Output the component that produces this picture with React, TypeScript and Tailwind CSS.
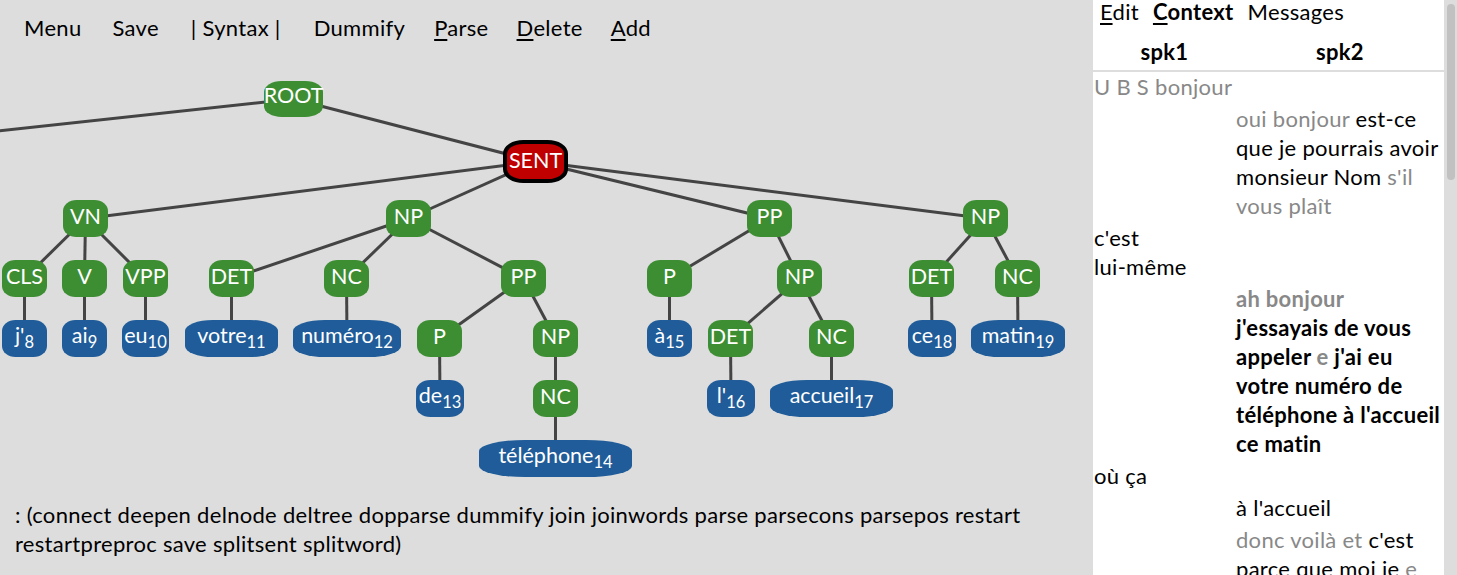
import React from "react";

type Node = { id: string; x1: number; x2: number; y1: number; y2: number; label: string; sub?: string; kind: "phrase" | "word" | "sent" };

const R2 = [200, 237];
const R3 = [260, 297];
const R4 = [320, 357];
const R5 = [380, 417];
const R6 = [440, 477];

const n = (id: string, x1: number, x2: number, row: number[], label: string, kind: Node["kind"] = "phrase", sub?: string): Node => ({ id, x1, x2, y1: row[0], y2: row[1], label, sub, kind });

const nodes: Node[] = [
  { id: "root", x1: 264, x2: 323, y1: 81, y2: 117, label: "ROOT", kind: "phrase" },
  { id: "sent", x1: 505, x2: 566, y1: 142, y2: 181, label: "SENT", kind: "sent" },
  n("vn", 63, 108, R2, "VN"),
  n("npa", 386, 431, R2, "NP"),
  n("ppa", 747, 792, R2, "PP"),
  n("npb", 963, 1008, R2, "NP"),
  n("cls", 2, 47, R3, "CLS"),
  n("v", 62, 107, R3, "V"),
  n("vpp", 123, 168, R3, "VPP"),
  n("deta", 209, 254, R3, "DET"),
  n("nca", 324, 369, R3, "NC"),
  n("ppb", 501, 546, R3, "PP"),
  n("pa", 647, 692, R3, "P"),
  n("npc", 777, 822, R3, "NP"),
  n("detb", 909, 954, R3, "DET"),
  n("ncb", 995, 1040, R3, "NC"),
  n("w8", 2, 47, R4, "j'", "word", "8"),
  n("w9", 62, 107, R4, "ai", "word", "9"),
  n("w10", 122, 169, R4, "eu", "word", "10"),
  n("w11", 185, 278, R4, "votre", "word", "11"),
  n("w12", 293, 401, R4, "numéro", "word", "12"),
  n("pb", 417, 462, R4, "P"),
  n("npd", 533, 578, R4, "NP"),
  n("w15", 647, 692, R4, "à", "word", "15"),
  n("detc", 708, 753, R4, "DET"),
  n("ncc", 809, 854, R4, "NC"),
  n("w18", 908, 956, R4, "ce", "word", "18"),
  n("w19", 971, 1065, R4, "matin", "word", "19"),
  n("w13", 416, 464, R5, "de", "word", "13"),
  n("ncd", 533, 578, R5, "NC"),
  n("w16", 707, 755, R5, "l'", "word", "16"),
  n("w17", 770, 893, R5, "accueil", "word", "17"),
  n("w14", 479, 632, R6, "téléphone", "word", "14"),
];

const edges: [string, string][] = [
  ["root", "sent"], ["sent", "vn"], ["sent", "npa"], ["sent", "ppa"], ["sent", "npb"],
  ["vn", "cls"], ["vn", "v"], ["vn", "vpp"], ["npa", "deta"], ["npa", "nca"], ["npa", "ppb"],
  ["ppb", "pb"], ["ppb", "npd"], ["ppa", "pa"], ["ppa", "npc"], ["npc", "detc"], ["npc", "ncc"],
  ["npb", "detb"], ["npb", "ncb"], ["cls", "w8"], ["v", "w9"], ["vpp", "w10"], ["deta", "w11"],
  ["nca", "w12"], ["pb", "w13"], ["npd", "ncd"], ["ncd", "w14"], ["pa", "w15"], ["detc", "w16"],
  ["ncc", "w17"], ["detb", "w18"], ["ncb", "w19"],
];

const byId = Object.fromEntries(nodes.map((d) => [d.id, d]));
const cx = (d: Node) => (d.x1 + d.x2) / 2;
const cy = (d: Node) => (d.y1 + d.y2) / 2;

function Tree() {
  return (
    <svg width={1093} height={433} viewBox="0 57 1093 433" className="block" style={{ fontFamily: "Lato, sans-serif" }}>
      <line x1={293.5} y1={99} x2={-300} y2={163} stroke="#444" strokeWidth={3} />
      {edges.map(([a, b]) => (
        <line key={a + b} x1={cx(byId[a])} y1={cy(byId[a])} x2={cx(byId[b])} y2={cy(byId[b])} stroke="#444" strokeWidth={3} />
      ))}
      {nodes.map((d) => {
        const w = d.x2 - d.x1;
        const h = d.y2 - d.y1;
        const fill = d.kind === "word" ? "#1f5c99" : d.kind === "sent" ? "#c00000" : "#3d8e33";
        const base = d.kind === "word" ? d.y1 + 22.5 : d.kind === "sent" ? 168 : d.id === "root" ? 103 : d.y1 + 23.5;
        return (
          <g key={d.id}>
            <rect x={d.x1} y={d.y1} width={w} height={h} rx={w * 0.3} ry={h * 0.3} fill={fill}
              stroke={d.kind === "sent" ? "#000" : "none"} strokeWidth={d.kind === "sent" ? 4 : 0} />
            <text x={cx(d)} y={base} textAnchor="middle" fill="#fff" fontSize={21.5}>
              {d.label}
              {d.sub && <tspan fontSize={16.5} dy={5}>{d.sub}</tspan>}
            </text>
          </g>
        );
      })}
    </svg>
  );
}

type Seg = { t: string; g?: boolean };
type Row = { col: 1 | 2; bold?: boolean; lines: Seg[][] };

const rows: Row[] = [
  { col: 1, lines: [[{ t: "U B S bonjour", g: true }]] },
  { col: 2, lines: [
    [{ t: "oui bonjour ", g: true }, { t: "est-ce" }],
    [{ t: "que je pourrais avoir" }],
    [{ t: "monsieur Nom " }, { t: "s'il", g: true }],
    [{ t: "vous plaît", g: true }],
  ] },
  { col: 1, lines: [[{ t: "c'est" }], [{ t: "lui-même" }]] },
  { col: 2, bold: true, lines: [
    [{ t: "ah bonjour", g: true }],
    [{ t: "j'essayais de vous" }],
    [{ t: "appeler " }, { t: "e", g: true }, { t: " j'ai eu" }],
    [{ t: "votre numéro de" }],
    [{ t: "téléphone à l'accueil" }],
    [{ t: "ce matin" }],
  ] },
  { col: 1, lines: [[{ t: "où ça" }]] },
  { col: 2, lines: [[{ t: "à l'accueil" }]] },
  { col: 2, lines: [
    [{ t: "donc voilà et ", g: true }, { t: "c'est" }],
    [{ t: "parce que moi je " }, { t: "e", g: true }],
  ] },
];

function Context() {
  return (
    <div className="w-[351px] h-full bg-white overflow-hidden text-[22px] tracking-[0.3px] text-black">
      <div className="flex h-[24px] leading-[24px] pl-[7px] gap-[14px]">
        <span><span className="underline underline-offset-[3px]">E</span>dit</span>
        <span className="font-bold"><span className="underline underline-offset-[3px]">C</span>ontext</span>
        <span>Messages</span>
      </div>
      <div className="flex h-[46px] pt-[13px] leading-[29px] font-bold">
        <div className="w-[143px] text-center">spk1</div>
        <div className="flex-1 text-center">spk2</div>
      </div>
      <div className="h-[2px] bg-[#dddddd]" />
      <div className="flex flex-col gap-[3px] leading-[29px]">
        {rows.map((r, i) => (
          <div key={i} className={`flex ${r.bold ? "font-bold" : ""}`}>
            <div className={r.col === 1 ? "pl-[1px] w-[143px]" : "pl-[143px]"}>
              {r.lines.map((l, j) => (
                <div key={j} className="whitespace-pre">
                  {l.map((s, k) => (
                    <span key={k} className={s.g ? "text-[#888888]" : ""}>{s.t}</span>
                  ))}
                </div>
              ))}
            </div>
          </div>
        ))}
      </div>
    </div>
  );
}

export default function App() {
  return (
    <div className="flex w-[1457px] h-[575px] overflow-hidden bg-[#dddddd] text-black" style={{ fontFamily: "Lato, sans-serif" }}>
      <div className="w-[1093px] flex flex-col shrink-0">
        <div className="h-[57px] pt-[13px] pl-[24px] flex text-[22px] tracking-[0.3px] leading-[29px]">
          <span>Menu</span>
          <span className="ml-[31px]">Save</span>
          <span className="ml-[32px]">| Syntax |</span>
          <span className="ml-[33px]">Dummify</span>
          <span className="ml-[29px]"><span className="underline underline-offset-[3px]">P</span>arse</span>
          <span className="ml-[28px]"><span className="underline underline-offset-[3px]">D</span>elete</span>
          <span className="ml-[28px]"><span className="underline underline-offset-[3px]">A</span>dd</span>
        </div>
        <Tree />
        <div className="pt-[10px] pl-[15px] pr-[40px] text-[22px] tracking-[0.3px] leading-[29px]">
          : (connect deepen delnode deltree dopparse dummify join joinwords parse parsecons parsepos restart restartpreproc save splitsent splitword)
        </div>
      </div>
      <Context />
      <div className="w-[13px] h-full pl-[3px] pr-[2px] pt-[4px]">
        <div className="h-[176px] rounded-full bg-[#c1c1c1]" />
      </div>
    </div>
  );
}
